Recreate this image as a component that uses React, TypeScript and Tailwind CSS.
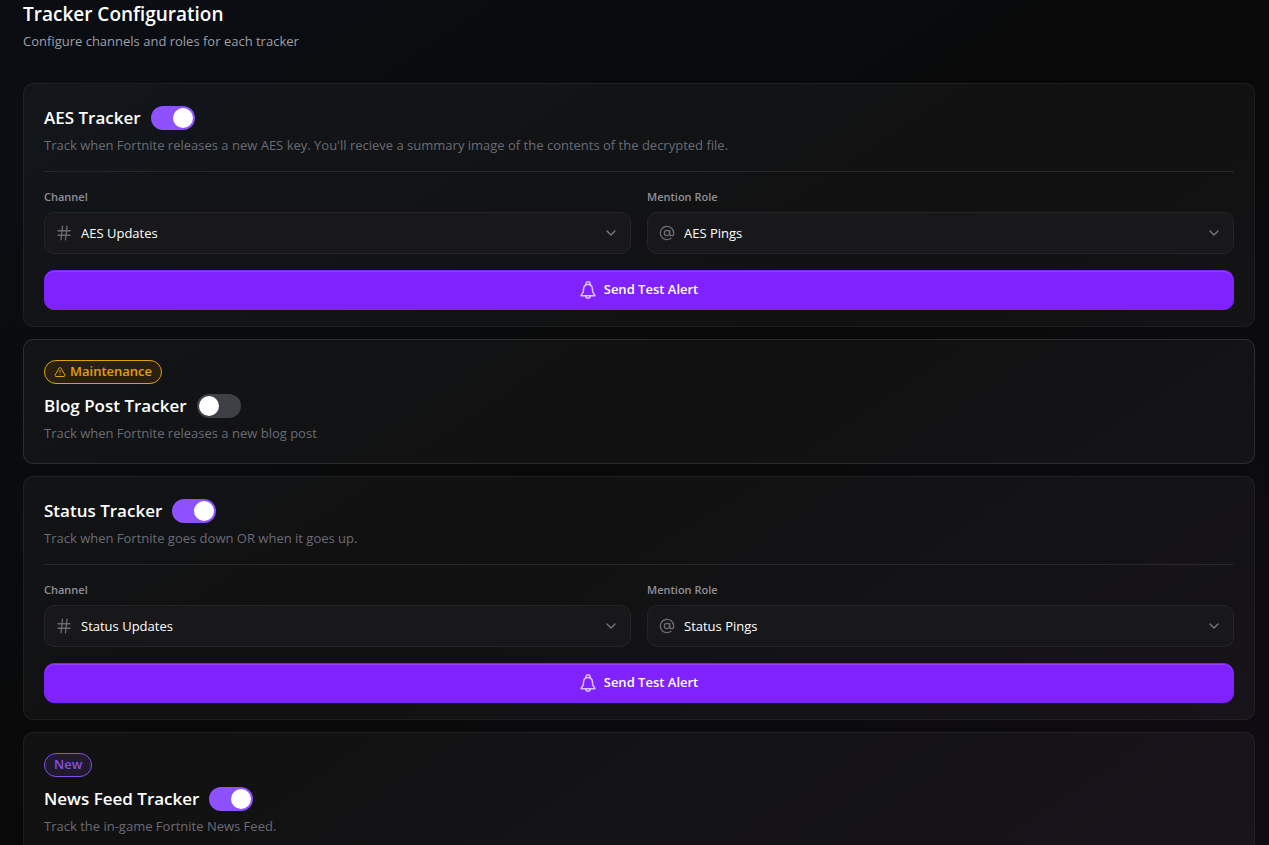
import { useId, useState } from 'react';
import { AtSign, ChevronDown, Hash, TriangleAlert } from 'lucide-react';

interface ITracker {
  id: string;
  name: string;
  description: string;
  enabled: boolean;
  badge?: 'maintenance' | 'new';
  channel?: string;
  role?: string;
}

const trackers: ITracker[] = [
  {
    id: 'aes',
    name: 'AES Tracker',
    description: "Track when Fortnite releases a new AES key. You'll recieve a summary image of the contents of the decrypted file.",
    enabled: true,
    channel: 'AES Updates',
    role: 'AES Pings',
  },
  {
    id: 'blog',
    name: 'Blog Post Tracker',
    description: 'Track when Fortnite releases a new blog post',
    enabled: false,
    badge: 'maintenance',
  },
  {
    id: 'status',
    name: 'Status Tracker',
    description: 'Track when Fortnite goes down OR when it goes up.',
    enabled: true,
    channel: 'Status Updates',
    role: 'Status Pings',
  },
  {
    id: 'news',
    name: 'News Feed Tracker',
    description: 'Track the in-game Fortnite News Feed.',
    enabled: true,
    badge: 'new',
  },
];

function BellIcon() {
  return (
    <svg className="h-[18px] w-4 text-white/70" viewBox="0 0 16 18" fill="none" stroke="currentColor" strokeWidth="1.5" strokeLinejoin="round" strokeLinecap="round">
      <path d="M6 3.600V2.500a2 1.700 0 0 1 4 0v1.100" />
      <path d="M8 3.400c-2.800 0-4.200 1.900-4.400 4.200L3.200 11 1 14.700h14L12.800 11l-.4-3.400C12.200 5.300 10.800 3.400 8 3.400z" />
      <path d="M5.800 15c0 1.300 1 2.200 2.200 2.200s2.200-.9 2.200-2.200" />
    </svg>
  )
}

function Badge({ type }: { type: 'maintenance' | 'new' }) {
  if (type === 'maintenance') {
    return (
      <span className="inline-flex h-6 items-center gap-1 rounded-full border border-[#e0a106] bg-[#2a2010] px-[9px] text-[13px] font-semibold text-[#e0a106]">
        <TriangleAlert className="h-3 w-3" />
        Maintenance
      </span>
    )
  }

  return (
    <span className="inline-flex h-6 items-center rounded-full border border-[#8350e8] bg-[#211a2d] px-[9px] text-[13px] font-semibold text-[#8350e8]">
      New
    </span>
  )
}

function Field({ label, value, icon }: { label: string; value: string; icon: React.ReactNode }) {
  const id = useId()

  return (
    <div>
      <label htmlFor={id} className="mb-[7px] block text-[11px] leading-4 font-semibold text-[#8f8f98]">{label}</label>
      <div className="relative">
        <span className="pointer-events-none absolute inset-y-0 left-[11px] flex w-[18px] items-center justify-center text-[#6b6b74]">{icon}</span>
        <select id={id} defaultValue={value} className="h-[42px] w-full appearance-none rounded-[10px] border border-[#252527] bg-[#18181a] pt-0.5 pr-10 pl-9 text-[13px] font-medium text-white outline-none">
          <option value={value}>{value}</option>
        </select>
        <ChevronDown className="pointer-events-none absolute top-[13px] right-3 h-4 w-4 text-[#77777f]" />
      </div>
    </div>
  )
}

function TrackerCard({ tracker }: { tracker: ITracker }) {
  const [enabled, setEnabled] = useState(tracker.enabled)

  return (
    <section className={`rounded-[10px] border bg-white/[0.035] px-5 pt-5 ${tracker.badge === 'maintenance' ? 'border-white/[0.11] pb-5' : 'border-white/[0.05] pb-4'}`}>
      {tracker.badge && (
        <div className="mb-2 flex">
          <Badge type={tracker.badge} />
        </div>
      )}
      <div className="flex h-7 items-center gap-2.5">
        <h2 className="text-[17px] leading-7 font-semibold text-white">{tracker.name}</h2>
        <label className="flex cursor-pointer items-center rounded-full">
          <input
            type="checkbox"
            role="switch"
            aria-label={tracker.name}
            className="peer sr-only"
            checked={enabled}
            onChange={(e) => setEnabled(e.target.checked)}
          />
          <span className="flex h-6 w-11 items-center justify-start rounded-full bg-[#3f3f46] px-0.5 peer-checked:justify-end peer-checked:bg-[#8e51ff]">
            <span className="h-5 w-5 rounded-full bg-white" />
          </span>
        </label>
      </div>
      <p className="mt-[3px] text-[13px] leading-5 text-[#6b6b74]">{tracker.description}</p>

      {tracker.channel && tracker.role && (
        <div className="mt-4 border-t border-[#27272a] pt-[17px]">
          <div className="grid grid-cols-2 gap-4">
            <Field label="Channel" value={tracker.channel} icon={<Hash className="h-[18px] w-[18px]" strokeWidth={1.75} />} />
            <Field label="Mention Role" value={tracker.role} icon={<AtSign className="h-4 w-4" strokeWidth={2} />} />
          </div>
          <button type="button" className="mt-4 flex h-10 w-full items-center justify-center gap-2 rounded-[10px] border border-[#7f22fe] bg-[#7f22fe] text-[13px] font-semibold text-white shadow-[inset_0_1px_0_rgba(255,255,255,0.15)]">
            <BellIcon />
            Send Test Alert
          </button>
        </div>
      )}
    </section>
  )
}

export default function App() {
  return (
    <div className="h-screen overflow-hidden bg-linear-to-br from-[#0a0e13] via-[#090909] to-[#0f0c13] font-['Open_Sans','Noto_Sans',sans-serif]">
      <main className="pr-3.5 pl-[23px]">
        <h1 className="text-[19px] leading-7 font-semibold text-white">Tracker Configuration</h1>
        <p className="mt-[3px] text-[13px] leading-5 text-[#9f9fa9]">Configure channels and roles for each tracker</p>
        <div className="mt-8 flex flex-col gap-3">
          {trackers.map(tracker => (
            <TrackerCard key={tracker.id} tracker={tracker} />
          ))}
        </div>
      </main>
    </div>
  )
}
